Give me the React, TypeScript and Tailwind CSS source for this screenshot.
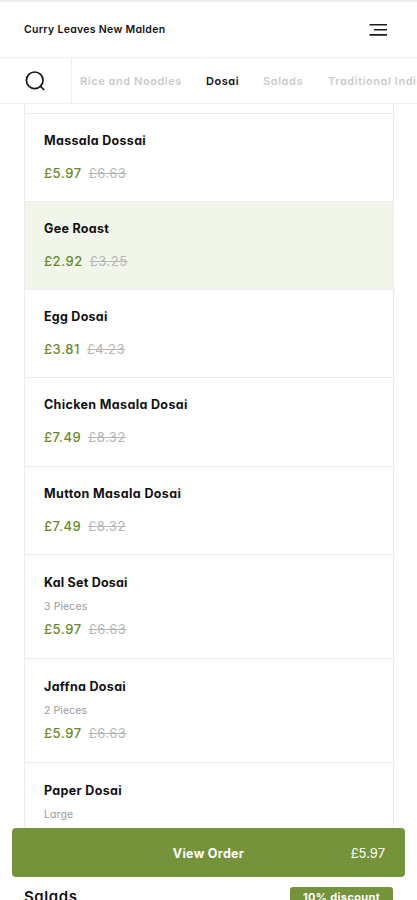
type MenuItem = {
  name: string;
  note?: string;
  price: string;
  oldPrice: string;
  selected?: boolean;
  height: string;
  tracking: string;
};

const items: MenuItem[] = [
  { name: "Massala Dossai", price: "£5.97", oldPrice: "£6.63", height: "h-[88px]", tracking: "tracking-[0.32px]" },
  { name: "Gee Roast", price: "£2.92", oldPrice: "£3.25", selected: true, height: "h-[88px]", tracking: "tracking-[0.3px]" },
  { name: "Egg Dosai", price: "£3.81", oldPrice: "£4.23", height: "h-[88px]", tracking: "tracking-[0.25px]" },
  { name: "Chicken Masala Dosai", price: "£7.49", oldPrice: "£8.32", height: "h-[89px]", tracking: "tracking-[0.36px]" },
  { name: "Mutton Masala Dosai", price: "£7.49", oldPrice: "£8.32", height: "h-[88px]", tracking: "tracking-[0.38px]" },
  { name: "Kal Set Dosai", note: "3 Pieces", price: "£5.97", oldPrice: "£6.63", height: "h-[104px]", tracking: "tracking-[0.22px]" },
  { name: "Jaffna Dosai", note: "2 Pieces", price: "£5.97", oldPrice: "£6.63", height: "h-[104px]", tracking: "tracking-[0.32px]" },
  { name: "Paper Dosai", note: "Large", price: "£5.97", oldPrice: "£6.63", height: "h-[104px]", tracking: "tracking-[0.34px]" },
];

function Header() {
  return (
    <header className="flex h-[58px] items-center justify-between border-t-2 border-b border-t-[#ececec] border-b-[#efefef] pr-[30px] pl-6">
      <h1 className="text-[10.5px] font-semibold tracking-[0.3px] whitespace-nowrap">
        Curry Leaves New Malden
      </h1>
      <svg width="18" height="14" viewBox="0 0 18 14" fill="none" stroke="#1c1c1c" strokeWidth="1.6">
        <path d="M0.5 1.7H18M5 6.8H18M0.5 11.9H18" />
      </svg>
    </header>
  );
}

function CategoryNav() {
  return (
    <nav className="flex h-[46px] border-b border-[#efefef]">
      <button className="flex w-[72px] shrink-0 items-center border-r border-[#efefef] pl-[25px]" aria-label="Search">
        <svg width="20" height="20" viewBox="0 0 20 20" fill="none" stroke="#151515" strokeWidth="1.7">
          <circle cx="9.7" cy="9.3" r="8.3" />
          <path d="M15 14.8L19.2 19" />
        </svg>
      </button>
      <div className="flex min-w-0 flex-1 items-center overflow-hidden pt-px pl-2 text-[11px] font-semibold tracking-[0.56px] whitespace-nowrap text-[#cbcbcb]">
        <span className="w-[126px] shrink-0">Rice and Noodles</span>
        <span className="w-[57px] shrink-0 text-[#111]">Dosai</span>
        <span className="w-[65px] shrink-0">Salads</span>
        <span className="shrink-0">Traditional Indian</span>
      </div>
    </nav>
  );
}

function MenuRow({ item }: { item: MenuItem }) {
  return (
    <li
      className={`shrink-0 border-t border-[#ececec] pl-[19px] ${item.height} ${
        item.selected ? "bg-[#f1f5ea]" : ""
      } ${item.note ? "pt-[18px]" : "pt-[17px]"}`}
    >
      <h3 className={`text-[12.5px] leading-[19px] font-bold ${item.tracking}`}>{item.name}</h3>
      {item.note && (
        <p className="mt-[7px] text-[10.5px] leading-4 tracking-[0.1px] text-[#9b9b9b]">{item.note}</p>
      )}
      <p className={`flex gap-[7px] text-[13px] leading-[18px] ${item.note ? "mt-[5px]" : "mt-[14px]"}`}>
        <span className="font-medium tracking-[0.55px] text-[#668a2a]">{item.price}</span>
        <span className="tracking-[0.5px] text-[#b5b5b5] line-through">{item.oldPrice}</span>
      </p>
    </li>
  );
}

export default function App() {
  return (
    <div className="relative flex h-[900px] w-[417px] flex-col overflow-hidden bg-white font-['Inter',sans-serif] text-[#111] [font-feature-settings:'cv11']">
      <Header />
      <CategoryNav />
      <main className="flex min-h-0 flex-1 flex-col pr-[23px] pl-6">
        <ul className="flex h-[752px] shrink-0 flex-col overflow-hidden border-x border-[#ececec] pt-[9px]">
          {items.map((item) => (
            <MenuRow key={item.name} item={item} />
          ))}
        </ul>
        <div className="mt-[31px] flex shrink-0 items-start justify-between">
          <h2 className="text-[15px] leading-5 font-semibold tracking-[0.6px]">Salads</h2>
          <span className="mr-px h-6 w-[103px] rounded-t-[3px] bg-[#74933b] pt-px text-center text-[11px] leading-[18px] font-bold tracking-[0.35px] text-white">
            10% discount
          </span>
        </div>
      </main>
      <button className="absolute top-[828px] left-3 grid h-[49px] w-[393px] grid-cols-[1fr_auto_1fr] items-center rounded-[4px] bg-[#74933b] px-5 text-white">
        <span className="col-start-2 pt-[3px] text-[12.5px] font-bold tracking-[0.3px]">View Order</span>
        <span className="pt-[2px] text-right text-[13px]">£5.97</span>
      </button>
    </div>
  );
}
